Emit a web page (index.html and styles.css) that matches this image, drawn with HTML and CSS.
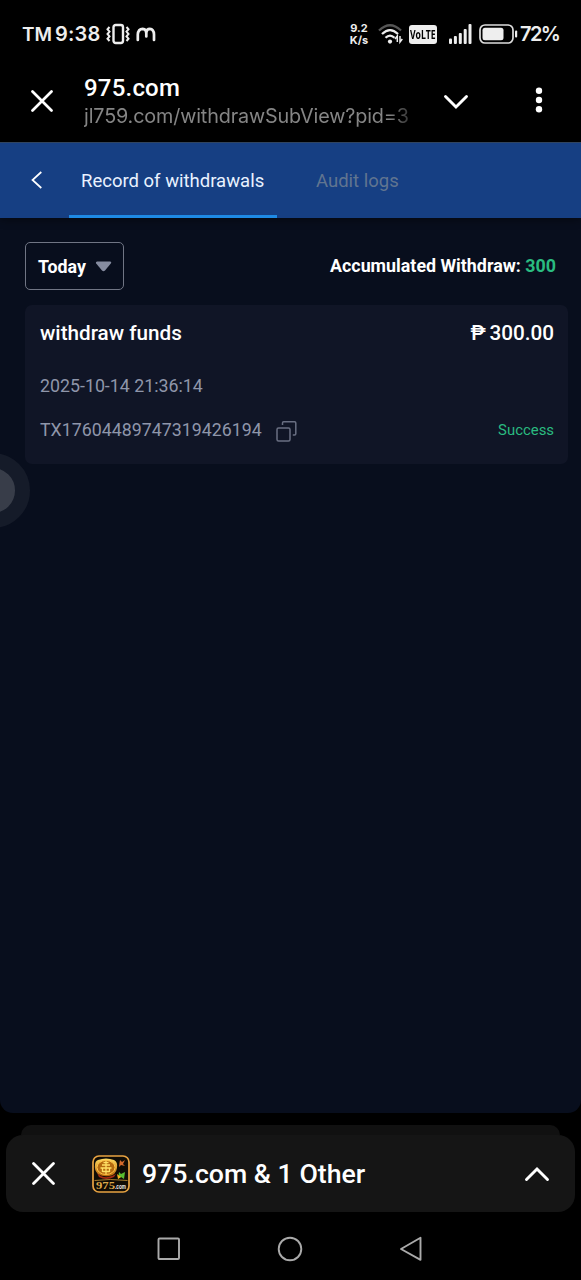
FILE: index.html
```html
<!DOCTYPE html>
<html lang="en">
<head>
<meta charset="utf-8">
<title>Record of withdrawals</title>
<link rel="stylesheet" href="styles.css">
</head>
<body>
<div class="screen">
  <header class="status">
    <span class="carrier">TM</span>
    <span class="clock">9:38</span>
    <svg class="vibrate" width="24" height="22" viewBox="0 0 24 22" fill="none" stroke="#eee">
      <rect x="7.500" y="2" width="9.500" height="18" rx="2.200" stroke-width="2.400"/>
      <path d="M3.500 4 1.500 6.300 3.500 8.600 1.500 11 3.500 13.400 1.500 15.700 3.500 18M20.500 4l2 2.300-2 2.300 2 2.400-2 2.400 2 2.300-2 2.300" stroke-width="2"/>
    </svg>
    <svg class="mlogo" width="20" height="15" viewBox="0 0 20 15" fill="none" stroke="#eee" stroke-width="2.700" stroke-linecap="round">
      <path d="M1.800 13V7.500q.300-5.500 5-5.700 3.500.2 3.500 4.200V9.500M10.300 6q.300-4.200 3.500-4.200 4 .2 4.200 5.700V13"/>
    </svg>
    <span class="spacer"></span>
    <span class="speed"><span>9.2</span><span>K/s</span></span>
    <svg class="wifi" width="25" height="22" viewBox="0 0 25 22" fill="none" stroke-width="2.300">
      <path d="M1 7.500q11-10.500 22 0" stroke="#555"/>
      <path d="M4 11q8-7.800 16 0M7.500 14.800q4.500-4.400 9 0" stroke="#eee"/>
      <circle cx="12" cy="18.600" r="2.100" fill="#eee"/>
      <path d="M19.300 19v-6l-2.300 3M22 13v6l2.300-3" stroke="#eee" stroke-width="1.500"/>
    </svg>
    <span class="volte"><span>VoLTE</span></span>
    <svg class="signal" width="23" height="20" viewBox="0 0 23 20" fill="#eee">
      <rect x="0" y="14.500" width="3" height="5.500" rx="1"/><rect x="4.900" y="12" width="3" height="8" rx="1"/><rect x="9.800" y="9" width="3" height="11" rx="1"/><rect x="14.700" y="5" width="3" height="15" rx="1"/><rect x="19.500" y="0" width="3" height="20" rx="1"/>
    </svg>
    <svg class="battery" width="39" height="20" viewBox="0 0 39 20">
      <rect x="1" y="1" width="33" height="18" rx="5" fill="none" stroke="#ddd" stroke-width="1.700"/>
      <rect x="3.500" y="3.700" width="21" height="12.600" rx="2.500" fill="#eee"/>
      <rect x="36" y="6.500" width="2.200" height="7" rx="1" fill="#eee"/>
    </svg>
    <span class="percent">72%</span>
  </header>

  <div class="browser">
    <svg class="close" width="22" height="22" viewBox="0 0 22 22"><path d="M1.500 1.500l19 19M20.500 1.500l-19 19"/></svg>
    <div class="address">
      <span class="site">975.com</span>
      <span class="url">jl759.com/withdrawSubView?pid=3</span>
    </div>
    <svg class="collapse" width="26" height="16" viewBox="0 0 26 16"><path d="M2.500 2.500 13 13 23.500 2.500"/></svg>
    <svg class="more" width="8" height="26" viewBox="0 0 8 26"><circle cx="4" cy="3.700" r="3.200"/><circle cx="4" cy="13" r="3.200"/><circle cx="4" cy="22.300" r="3.200"/></svg>
  </div>

  <main class="page">
    <nav class="tabs">
      <svg class="back" width="12" height="18" viewBox="0 0 12 18"><path d="M10.300 1 1.500 9l8.800 8"/></svg>
      <span class="tab active">Record of withdrawals</span>
      <span class="tab">Audit logs</span>
    </nav>
    <div class="filters">
      <span class="period"><span class="period-name">Today</span><svg width="17" height="11" viewBox="0 0 17 11"><path d="M2 .5h13q2 .3.800 2L10 9.500q-1.500 1.400-3 0L1.200 2.500Q.1.900 2 .5z" fill="#868ca0"/></svg></span>
      <span class="total">Accumulated Withdraw: <span class="amount">300</span></span>
    </div>
    <section class="card">
      <div class="row title"><span class="kind">withdraw funds</span><span class="sum"><span class="peso">₱</span><span class="value">300.00</span></span></div>
      <div class="row date">2025-10-14 21:36:14</div>
      <div class="row tx">
        <span class="txid">TX17604489747319426194</span>
        <svg class="copy" width="21" height="21" viewBox="0 0 21 21"><rect x="1" y="7" width="13" height="13" rx="1.500"/><path d="M6.500 4V1.900q0-1.100 1.100-1.100h11q1.200 0 1.200 1.200v10.800q0 1.200-1.200 1.200h-1.800"/></svg>
        <span class="state">Success</span>
      </div>
    </section>
    <span class="floater"></span>
  </main>

  <div class="sheet-stack">
    <div class="sheet-behind"></div>
    <div class="sheet">
      <svg class="close" width="23" height="23" viewBox="0 0 22 22"><path d="M1.500 1.500l19 19M20.500 1.500l-19 19"/></svg>
      <svg class="app" width="38" height="38" viewBox="0 0 38 38">
        <defs><linearGradient id="gold" x1="0" y1="0" x2="0" y2="1"><stop offset="0" stop-color="#ffdc62"/><stop offset="1" stop-color="#b86509"/></linearGradient></defs>
        <rect x="1" y="1" width="36" height="36" rx="6" fill="#100c05" stroke="#e8a342" stroke-width="1.700"/>
        <path d="M5 18q8 8 19 1l-2 3q-8 4-15 0z" fill="#a52b13"/>
        <path d="M6 5q8-3 16 0 4 2 3 8-1 7-8 8-6 1-11-2-4-4-3-9 0-4 3-5z" fill="url(#gold)"/>
        <ellipse cx="14" cy="12.500" rx="9" ry="7" fill="#b46a10" stroke="#ffc348"/>
        <path d="M14 6v13M10 10h8M8.500 13h11M10.500 16.500h7M11.500 7.700h5M10.500 13v4M17.500 13v4" stroke="#ffe064" stroke-width="1.300"/>
        <path d="M28 5l2 2 3-2-2 4 2 2-4-1-2 2 .500-4z" fill="#d66a2c"/>
        <path d="M27 17l2 2 4-2-1 7-3-2-3 2z" fill="#58bd30"/><path d="M25 19l4 3-3 2z" fill="#f3b421"/>
        <path d="M2.500 25.500q15-2 33 0" stroke="#a57c2d" fill="none"/>
        <text class="app-name" x="4" y="33.500" textLength="19" lengthAdjust="spacingAndGlyphs">975</text>
        <text class="app-dot" x="23" y="33.500" textLength="11" lengthAdjust="spacingAndGlyphs">.com</text>
      </svg>
      <span class="label">975.com &amp; 1 Other</span>
      <svg class="expand" width="26" height="16" viewBox="0 0 26 16"><path d="M2.500 13.500 13 3l10.500 10.500"/></svg>
    </div>
  </div>

  <footer class="navbar">
    <svg width="24" height="26" viewBox="0 0 24 26"><rect x="1.500" y="2.500" width="20.500" height="20.500" rx="1"/></svg>
    <svg width="26" height="26" viewBox="0 0 26 26"><circle cx="13" cy="13" r="11.300"/></svg>
    <svg width="24" height="26" viewBox="0 0 24 26"><path d="M21.500 1.800v22L2 13z"/></svg>
  </footer>
</div>
</body>
</html>
```

FILE: styles.css
```css
* { box-sizing: border-box; }
body { margin: 0; background: #000; }
svg { display: block; flex: none; }
.screen { width: 581px; height: 1280px; overflow: hidden; background: #000; color: #fff; font-family: Roboto, sans-serif; display: flex; flex-direction: column; white-space: nowrap; }
.status { height: 68px; flex: none; display: flex; align-items: center; padding: 0 22px; color: #eee; font-family: Inter, sans-serif; font-weight: 600; }
.carrier { font-size: 19px; width: 33px; }
.clock { font-size: 20px; width: 51px; letter-spacing: .2px; }
.mlogo { margin-left: 6px; }
.spacer { flex: 1; }
.speed { display: flex; flex-direction: column; align-items: center; font-size: 11px; line-height: 11px; font-weight: 700; width: 20px; margin-right: 9px; gap: 1px; }
.volte { margin-left: 6px; width: 28px; height: 19px; border-radius: 3px; background: #eee; color: #000; font: 700 12px/19px "Open Sans", sans-serif; display: flex; justify-content: center; }
.volte span { transform: scaleX(.72); }
.signal { margin-left: 12px; }
.battery { margin-left: 7px; }
.percent { font-size: 20px; margin-left: 2px; width: 39px; letter-spacing: -1.600px; }

.browser { height: 74px; flex: none; display: flex; padding-left: 31px; }
.close { fill: none; stroke: #fff; stroke-width: 2.700; stroke-linecap: round; }
.browser .close { margin-top: 22px; }
.address { width: 330px; margin-left: 31px; padding-top: 6px; display: flex; flex-direction: column; }
.site { font-size: 24px; line-height: 28px; font-weight: 500; letter-spacing: .2px; }
.url { font: 400 19.800px/29px Inter, sans-serif; color: #858585; letter-spacing: -.150px; -webkit-mask-image: linear-gradient(90deg, #000 305px, transparent 338px); mask-image: linear-gradient(90deg, #000 305px, transparent 338px); }
.collapse, .expand { fill: none; stroke: #fff; stroke-width: 2.900; stroke-linecap: round; }
.collapse { margin: 26px 0 0 29px; }
.more { fill: #fff; margin: 19px 0 0 66px; }

.page { position: relative; height: 971px; flex: none; background: #080e1d; border-radius: 0 0 13px 13px; overflow: hidden; }
.tabs { height: 76px; background: #163f83; border-top: 1px solid #30445f; display: flex; box-shadow: 0 2px 8px #0006; }
.back { margin: 28px 25px 0 31px; fill: none; stroke: #fff; stroke-width: 1.700; }
.tab { height: 75px; padding: 0 12px; font-size: 18.500px; line-height: 76px; color: #617590; margin-left: 27px; }
.tab.active { width: 208px; margin-left: 1px; color: #e9f2ff; border-bottom: 3px solid #1e8ae5; }
.filters { padding: 24px 25px 0; height: 87px; display: flex; align-items: flex-start; justify-content: space-between; }
.period { width: 99px; height: 48px; border: 1px solid #707584; border-radius: 5px; padding: 0 11px 0 12px; display: flex; align-items: center; justify-content: space-between; font-size: 17.800px; font-weight: 700; }
.total { font-size: 17.850px; font-weight: 700; line-height: 48px; }
.amount { color: #2abb80; }
.card { margin: 0 13px 0 25px; height: 159px; border-radius: 7px; background: #101526; padding: 0 14px 0 15px; }
.row { display: flex; align-items: center; }
.title { height: 56px; font-size: 20.700px; font-weight: 500; justify-content: space-between; }
.sum { display: flex; }
.peso { width: 19px; }
.date { height: 49px; font-size: 17.800px; color: #8f96aa; }
.tx { height: 39px; font-size: 17.800px; color: #8f96aa; }
.copy { margin: 3px 0 0 14px; fill: none; stroke: #696f82; stroke-width: 1.500; }
.state { margin-left: auto; font-size: 14.900px; color: #2abb80; }
.floater { position: absolute; left: -45px; top: 311px; width: 75px; height: 75px; border-radius: 50%; border: 15px solid #151b29; background: #383d49; }

.sheet-stack { height: 99px; flex: none; padding: 12px 6px 0; }
.sheet-behind { height: 10px; margin: 0 15px; border-radius: 16px 16px 0 0; background: #111; }
.sheet { height: 77px; border-radius: 17px; background: #151515; display: flex; align-items: center; padding: 0 25px 0 26px; }
.app { margin-left: 37px; overflow: visible; }
.app-name { font: 700 10px "Liberation Serif", serif; fill: #dca849; }
.app-dot { font: 700 7px "Liberation Sans", sans-serif; fill: #eee; }
.label { font-size: 26.700px; font-weight: 500; margin-left: 12px; }
.expand { margin-left: auto; }
.navbar { flex: 1; display: flex; justify-content: center; gap: 96px; padding: 24px 1px 0 0; }
.navbar svg { fill: none; stroke: #aaa; stroke-width: 1.900; stroke-linejoin: round; }
```
